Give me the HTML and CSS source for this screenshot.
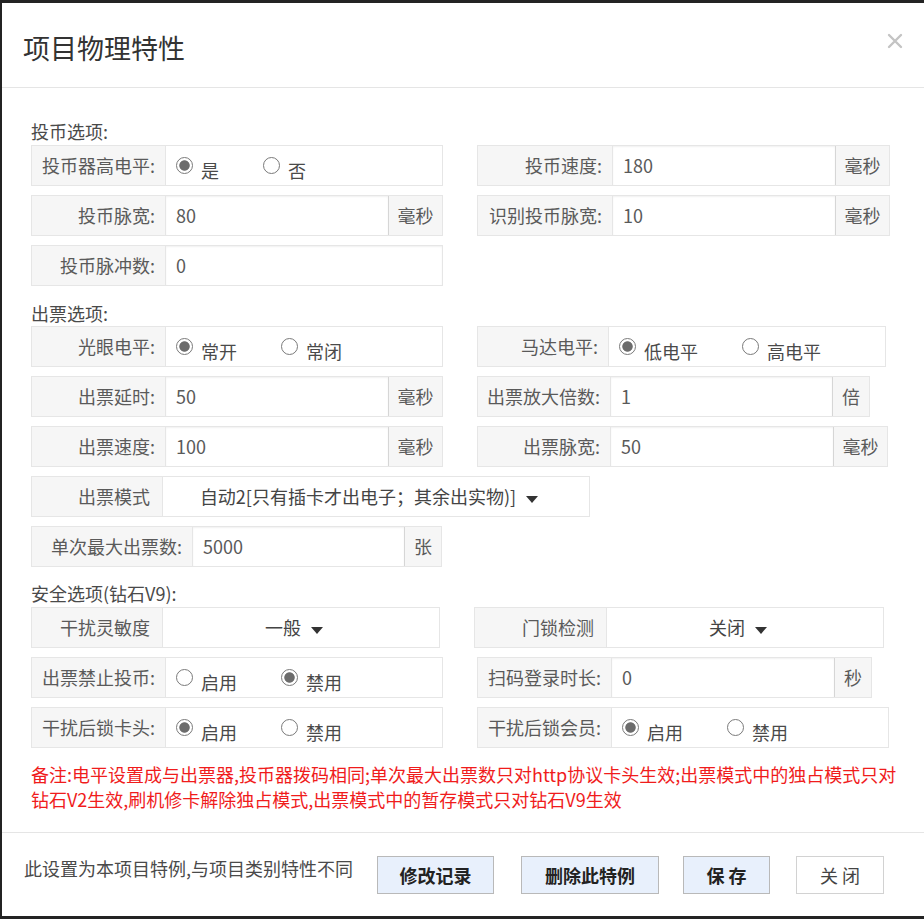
FILE: index.html
```html
<!DOCTYPE html>
<html lang="zh-CN">
<head>
<meta charset="utf-8">
<title>项目物理特性</title>
<link rel="stylesheet" href="styles.css">
</head>
<body>
<div class="dialog">
  <div class="header">
    <h1 class="title">项目物理特性</h1>
    <span class="close"><svg width="16" height="16" viewBox="0 0 16 16"><path d="M2 2L14 14M14 2L2 14" stroke="#c4c4c4" stroke-width="2.4" stroke-linecap="round"/></svg></span>
  </div>
  <div class="content">
    <div class="sec">投币选项:</div>
    <div class="grid">
      <div class="field">
        <div class="lbl">投币器高电平:</div>
        <div class="radios">
          <span class="opt"><i class="radio on"></i><span class="opt-text">是</span></span>
          <span class="opt"><i class="radio"></i><span class="opt-text">否</span></span>
        </div>
      </div>
      <div class="field w-413">
        <div class="lbl l-135">投币速度:</div>
        <div class="val">180</div>
        <div class="addon">毫秒</div>
      </div>
      <div class="field">
        <div class="lbl">投币脉宽:</div>
        <div class="val">80</div>
        <div class="addon">毫秒</div>
      </div>
      <div class="field w-413">
        <div class="lbl l-135">识别投币脉宽:</div>
        <div class="val">10</div>
        <div class="addon">毫秒</div>
      </div>
      <div class="field">
        <div class="lbl">投币脉冲数:</div>
        <div class="val">0</div>
      </div>
    </div>

    <div class="sec sec2">出票选项:</div>
    <div class="grid">
      <div class="field">
        <div class="lbl">光眼电平:</div>
        <div class="radios">
          <span class="opt"><i class="radio on"></i><span class="opt-text">常开</span></span>
          <span class="opt"><i class="radio"></i><span class="opt-text">常闭</span></span>
        </div>
      </div>
      <div class="field w-409">
        <div class="lbl l-131">马达电平:</div>
        <div class="radios">
          <span class="opt"><i class="radio on"></i><span class="opt-text">低电平</span></span>
          <span class="opt"><i class="radio"></i><span class="opt-text">高电平</span></span>
        </div>
      </div>
      <div class="field">
        <div class="lbl">出票延时:</div>
        <div class="val">50</div>
        <div class="addon">毫秒</div>
      </div>
      <div class="field w-393">
        <div class="lbl l-133">出票放大倍数:</div>
        <div class="val">1</div>
        <div class="addon addon-one">倍</div>
      </div>
      <div class="field">
        <div class="lbl">出票速度:</div>
        <div class="val">100</div>
        <div class="addon">毫秒</div>
      </div>
      <div class="field w-411">
        <div class="lbl l-133">出票脉宽:</div>
        <div class="val">50</div>
        <div class="addon">毫秒</div>
      </div>
      <div class="field field-wide w-559">
        <div class="lbl l-131 lbl-plain">出票模式</div>
        <div class="sel">自动2[只有插卡才出电子；其余出实物)]<i class="caret"></i></div>
      </div>
      <div class="field w-411">
        <div class="lbl l-161">单次最大出票数:</div>
        <div class="val">5000</div>
        <div class="addon addon-one">张</div>
      </div>
    </div>

    <div class="sec sec3">安全选项(钻石V9):</div>
    <div class="grid">
      <div class="field w-409">
        <div class="lbl l-131 lbl-plain">干扰灵敏度</div>
        <div class="sel">一般<i class="caret"></i></div>
      </div>
      <div class="field w-410 shift-left">
        <div class="lbl l-132 lbl-plain">门锁检测</div>
        <div class="sel">关闭<i class="caret"></i></div>
      </div>
      <div class="field">
        <div class="lbl">出票禁止投币:</div>
        <div class="radios">
          <span class="opt"><i class="radio"></i><span class="opt-text">启用</span></span>
          <span class="opt"><i class="radio on"></i><span class="opt-text">禁用</span></span>
        </div>
      </div>
      <div class="field w-395">
        <div class="lbl">扫码登录时长:</div>
        <div class="val">0</div>
        <div class="addon addon-one">秒</div>
      </div>
      <div class="field">
        <div class="lbl">干扰后锁卡头:</div>
        <div class="radios">
          <span class="opt"><i class="radio on"></i><span class="opt-text">启用</span></span>
          <span class="opt"><i class="radio"></i><span class="opt-text">禁用</span></span>
        </div>
      </div>
      <div class="field w-412">
        <div class="lbl">干扰后锁会员:</div>
        <div class="radios">
          <span class="opt"><i class="radio on"></i><span class="opt-text">启用</span></span>
          <span class="opt"><i class="radio"></i><span class="opt-text">禁用</span></span>
        </div>
      </div>
    </div>

    <p class="note">备注:电平设置成与出票器,投币器拨码相同;单次最大出票数只对http协议卡头生效;出票模式中的独占模式只对<br>钻石V2生效,刷机修卡解除独占模式,出票模式中的暂存模式只对钻石V9生效</p>
  </div>
  <div class="footer">
    <span class="foot-text">此设置为本项目特例,与项目类别特性不同</span>
    <button class="btn btn-log">修改记录</button>
    <button class="btn btn-del">删除此特例</button>
    <button class="btn btn-save">保 存</button>
    <button class="btn btn-close">关 闭</button>
  </div>
</div>
</body>
</html>
```
FILE: styles.css
```css
html, body {
  margin: 0;
  padding: 0;
}
body {
  background: #232323;
  font-family: "Noto Sans CJK SC", "Noto Sans", sans-serif;
  font-size: 18px;
  color: #555;
  width: 924px;
  height: 919px;
  overflow: hidden;
}
.dialog {
  margin: 3px 0 0 2px;
  width: 922px;
  height: 913px;
  background: #fff;
  display: flex;
  flex-direction: column;
  box-sizing: border-box;
}
.header {
  height: 85px;
  flex: none;
  box-sizing: border-box;
  border-bottom: 1px solid #e5e5e5;
  display: flex;
  justify-content: space-between;
  align-items: flex-start;
  padding: 0 21px 0 21px;
}
.title {
  margin: 27px 0 0 0;
  font-size: 27px;
  line-height: 36px;
  font-weight: normal;
  color: #333;
}
.close {
  margin-top: 30px;
  width: 16px;
  height: 16px;
  display: block;
}
.close svg {
  display: block;
}
.content {
  flex: 1;
  padding: 33px 0 0 29px;
}
.sec {
  line-height: 20px;
  color: #4a4a4a;
  margin-bottom: 4px;
}
.sec2 {
  margin-top: 17px;
  margin-bottom: 3px;
}
.sec3 {
  margin-top: 16px;
  margin-bottom: 4px;
}
.grid {
  display: grid;
  grid-template-columns: 412px auto;
  column-gap: 34px;
  row-gap: 9px;
  justify-items: start;
  align-items: start;
}
.field {
  display: flex;
  width: 412px;
  height: 41px;
  box-sizing: border-box;
  border: 1px solid #e6e6e6;
  background: #fff;
}
.field-wide {
  grid-column: 1 / -1;
}
.w-393 { width: 393px; }
.w-395 { width: 395px; }
.w-409 { width: 409px; }
.w-410 { width: 410px; }
.w-411 { width: 411px; }
.w-412 { width: 412px; }
.w-413 { width: 413px; }
.w-559 { width: 559px; }
.shift-left { margin-left: -3px; }
.lbl {
  width: 134px;
  flex: none;
  box-sizing: border-box;
  background: #f6f6f6;
  border-right: 1px solid #e6e6e6;
  text-align: right;
  padding-right: 10px;
  line-height: 39px;
  color: #5a5a5a;
  white-space: nowrap;
}
.lbl-plain { padding-right: 12px; }
.l-131 { width: 131px; }
.l-132 { width: 132px; }
.l-133 { width: 133px; }
.l-135 { width: 135px; }
.l-161 { width: 161px; }
.val {
  flex: 1;
  padding-left: 10px;
  line-height: 39px;
  color: #5a5a5a;
  box-shadow: inset 0 1px 2px rgba(0, 0, 0, 0.06);
}
.addon {
  width: 54px;
  flex: none;
  box-sizing: border-box;
  background: #f6f6f6;
  border-left: 1px solid #d6d6d6;
  text-align: center;
  line-height: 39px;
  color: #5a5a5a;
}
.addon-one { width: 37px; }
.radios {
  flex: 1;
  display: flex;
  align-items: center;
  padding-left: 10px;
}
.opt {
  display: flex;
  align-items: center;
  margin-right: 44px;
  color: #4a4a4a;
}
.opt-text {
  padding-top: 8px;
  line-height: 20px;
}
.radio {
  flex: none;
  width: 17px;
  height: 17px;
  box-sizing: border-box;
  border: 1.5px solid #7a7a7a;
  border-radius: 50%;
  margin-right: 8px;
  background: #fff;
}
.radio.on {
  background: radial-gradient(circle, #6c6c6c 0, #6c6c6c 4.8px, #fff 5.6px);
}
.sel {
  flex: 1;
  text-align: center;
  line-height: 39px;
  color: #444;
  padding-right: 14px;
  white-space: nowrap;
}
.caret {
  display: inline-block;
  width: 0;
  height: 0;
  border-left: 6px solid transparent;
  border-right: 6px solid transparent;
  border-top: 7px solid #333;
  margin-left: 10px;
  vertical-align: middle;
}
.note {
  margin: 14px 0 0 0;
  color: #f01c1c;
  line-height: 25px;
  white-space: nowrap;
}
.footer {
  height: 84px;
  flex: none;
  box-sizing: border-box;
  border-top: 1px solid #e5e5e5;
  display: flex;
  align-items: flex-start;
  padding: 23px 0 0 22px;
}
.foot-text {
  line-height: 24px;
  color: #4a4a4a;
  margin-right: 24px;
  white-space: nowrap;
}
.btn {
  height: 38px;
  box-sizing: border-box;
  border: 1px solid #b9b9b9;
  background: #e8f0fc;
  font-family: inherit;
  font-size: 18px;
  font-weight: bold;
  color: #222;
  padding: 0;
  line-height: 36px;
  text-align: center;
  border-radius: 0;
}
.btn-log { width: 117px; margin-right: 27px; }
.btn-del { width: 138px; margin-right: 24px; }
.btn-save { width: 87px; margin-right: 26px; }
.btn-close {
  width: 88px;
  background: #fff;
  border-color: #d2d2d2;
  font-weight: normal;
  color: #444;
}
```
